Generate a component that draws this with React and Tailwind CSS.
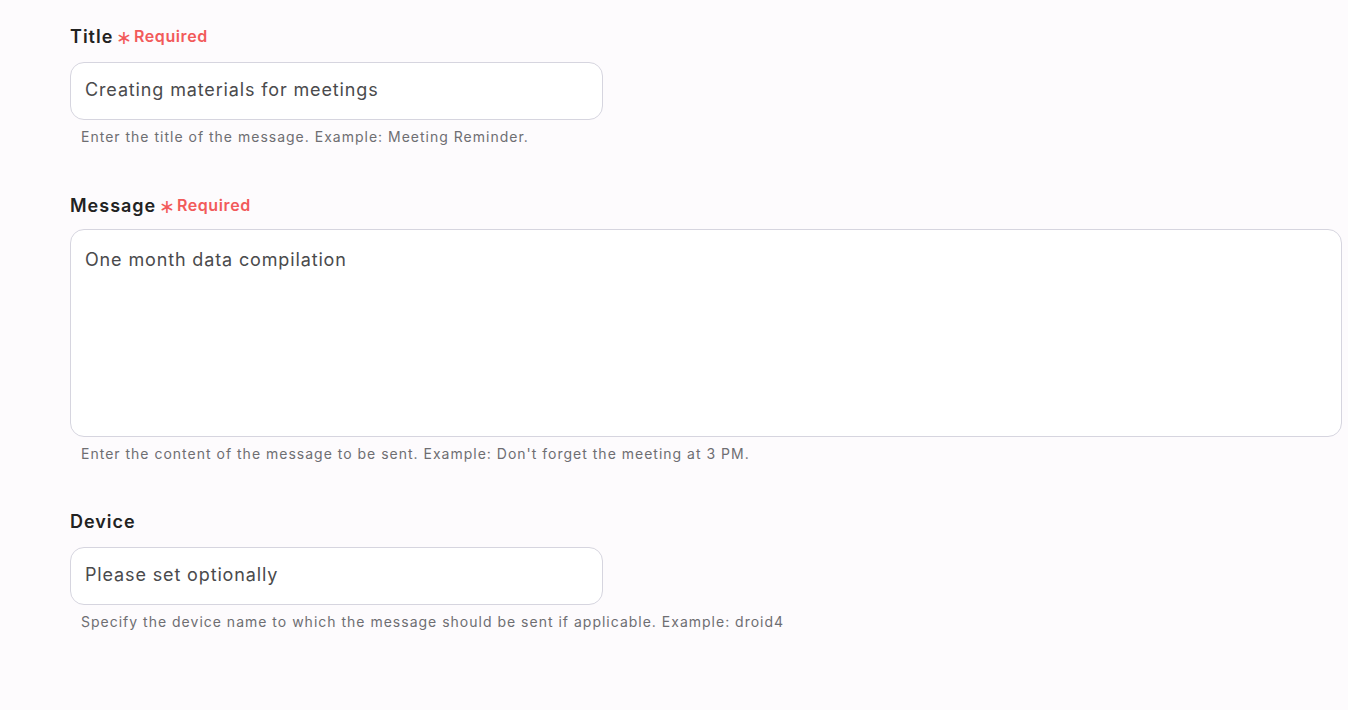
export default function App() {
  const font = { fontFamily: "Inter, 'Noto Sans', sans-serif" };

  const Required = () => (
    <span className="ml-[3px] inline-flex items-center text-[16px] font-semibold tracking-[0.6px] text-[#f25a5a]">
      <span className="mr-[1px] text-[19px] font-normal leading-none translate-y-[1px]">∗</span>
      Required
    </span>
  );

  return (
    <div
      className="min-h-screen w-full bg-[#fdfbfd] pl-[70px] pr-[6px] pt-[24px]"
      style={font}
    >
      {/* Title */}
      <div className="flex h-6 items-center text-[18px] font-semibold tracking-[1px] text-[#222222]">
        Title
        <Required />
      </div>
      <input
        className="mt-[14px] block h-[58px] w-[533px] rounded-[14px] border border-[#d6d5df] bg-white px-[14px] pb-[4px] text-[18px] tracking-[0.86px] text-[#4a4a4c] outline-none"
        defaultValue="Creating materials for meetings"
      />
      <p className="mt-[7px] pl-[11px] text-[14px] leading-5 tracking-[1px] text-[#6e6e72]">
        Enter the title of the message. Example: Meeting Reminder.
      </p>

      {/* Message */}
      <div className="mt-[46px] flex h-6 items-center text-[18px] font-semibold tracking-[1px] text-[#222222]">
        Message
        <Required />
      </div>
      <textarea
        className="mt-[12px] block h-[208px] w-full resize-none rounded-[14px] border border-[#d6d5df] bg-white px-[14px] py-[16px] text-[18px] leading-[28px] tracking-[0.86px] text-[#4a4a4c] outline-none"
        defaultValue="One month data compilation"
      />
      <p className="mt-[7px] pl-[11px] text-[14px] leading-5 tracking-[1px] text-[#6e6e72]">
        Enter the content of the message to be sent. Example: Don't forget the meeting at 3 PM.
      </p>

      {/* Device */}
      <div className="mt-[45px] flex h-6 items-center text-[18px] font-semibold tracking-[1px] text-[#222222]">
        Device
      </div>
      <input
        className="mt-[14px] block h-[58px] w-[533px] rounded-[14px] border border-[#d6d5df] bg-white px-[14px] pb-[4px] text-[18px] tracking-[0.86px] text-[#4a4a4c] outline-none"
        defaultValue="Please set optionally"
      />
      <p className="mt-[7px] pl-[11px] text-[14px] leading-5 tracking-[1px] text-[#6e6e72]">
        Specify the device name to which the message should be sent if applicable. Example: droid4
      </p>
    </div>
  );
}
